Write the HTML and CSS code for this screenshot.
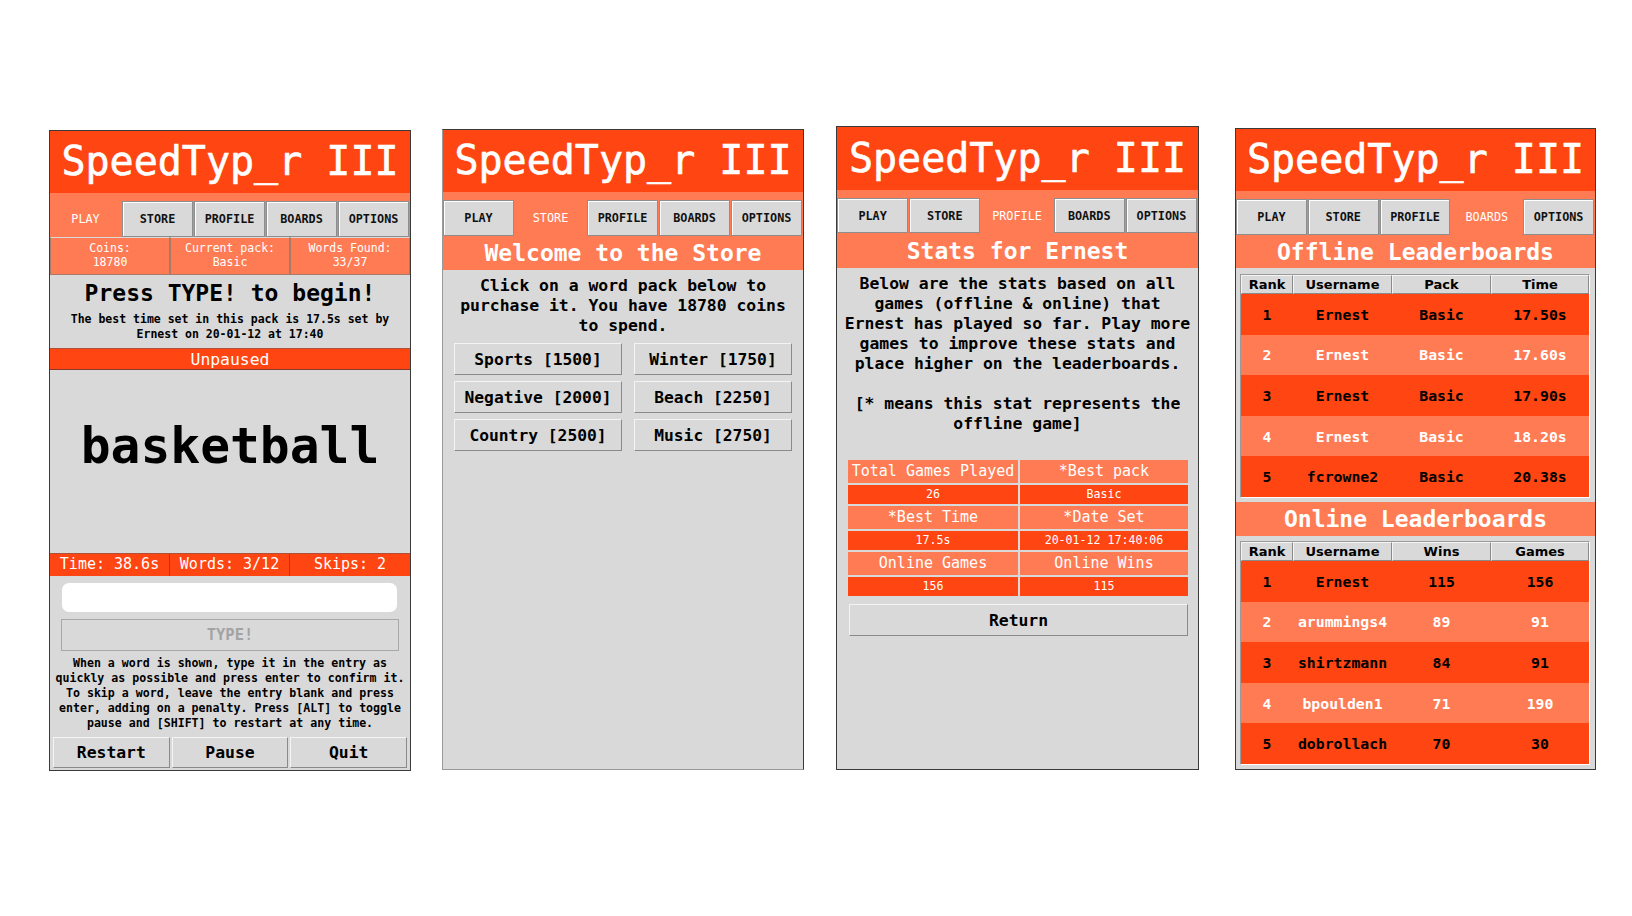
FILE: index.html
```html
<!DOCTYPE html>
<html>
<head>
<meta charset="utf-8">
<title>SpeedTyp_r III</title>
<link rel="stylesheet" href="styles.css">
</head>
<body>
<div class="screens">

  <section class="win win-play">
    <header class="title">SpeedTyp_r III</header>
    <nav class="tabs">
      <span class="tab active">PLAY</span><span class="tab">STORE</span><span class="tab">PROFILE</span><span class="tab">BOARDS</span><span class="tab">OPTIONS</span>
    </nav>
    <div class="info-row">
      <div class="info-cell">Coins:<br>18780</div>
      <div class="info-cell">Current pack:<br>Basic</div>
      <div class="info-cell">Words Found:<br>33/37</div>
    </div>
    <div class="prompt">
      <h2 class="prompt-head">Press TYPE! to begin!</h2>
      <p class="prompt-note">The best time set in this pack is 17.5s set by<br>Ernest on 20-01-12 at 17:40</p>
    </div>
    <div class="status-bar">Unpaused</div>
    <div class="word-area">basketball</div>
    <div class="stats-bar">
      <span class="stats-cell">Time: 38.6s</span>
      <span class="stats-cell">Words: 3/12</span>
      <span class="stats-cell">Skips: 2</span>
    </div>
    <div class="entry"></div>
    <div class="btn type-btn">TYPE!</div>
    <p class="instructions">When a word is shown, type it in the entry as<br>quickly as possible and press enter to confirm it.<br>To skip a word, leave the entry blank and press<br>enter, adding on a penalty. Press [ALT] to toggle<br>pause and [SHIFT] to restart at any time.</p>
    <div class="controls">
      <div class="btn ctrl-btn">Restart</div>
      <div class="btn ctrl-btn">Pause</div>
      <div class="btn ctrl-btn">Quit</div>
    </div>
  </section>

  <section class="win win-store">
    <header class="title">SpeedTyp_r III</header>
    <nav class="tabs">
      <span class="tab">PLAY</span><span class="tab active">STORE</span><span class="tab">PROFILE</span><span class="tab">BOARDS</span><span class="tab">OPTIONS</span>
    </nav>
    <div class="sub-bar">Welcome to the Store</div>
    <p class="para">Click on a word pack below to<br>purchase it. You have 18780 coins<br>to spend.</p>
    <div class="packs">
      <div class="btn pack-btn">Sports [1500]</div>
      <div class="btn pack-btn">Winter [1750]</div>
      <div class="btn pack-btn">Negative [2000]</div>
      <div class="btn pack-btn">Beach [2250]</div>
      <div class="btn pack-btn">Country [2500]</div>
      <div class="btn pack-btn">Music [2750]</div>
    </div>
  </section>

  <section class="win win-profile">
    <header class="title">SpeedTyp_r III</header>
    <nav class="tabs">
      <span class="tab">PLAY</span><span class="tab">STORE</span><span class="tab active">PROFILE</span><span class="tab">BOARDS</span><span class="tab">OPTIONS</span>
    </nav>
    <div class="sub-bar">Stats for Ernest</div>
    <p class="para">Below are the stats based on all<br>games (offline &amp; online) that<br>Ernest has played so far. Play more<br>games to improve these stats and<br>place higher on the leaderboards.<br><br>[* means this stat represents the<br>offline game]</p>
    <div class="stat-grid">
      <div class="stat-head">Total Games Played</div>
      <div class="stat-head">*Best pack</div>
      <div class="stat-val">26</div>
      <div class="stat-val">Basic</div>
      <div class="stat-head">*Best Time</div>
      <div class="stat-head">*Date Set</div>
      <div class="stat-val">17.5s</div>
      <div class="stat-val">20-01-12 17:40:06</div>
      <div class="stat-head">Online Games</div>
      <div class="stat-head">Online Wins</div>
      <div class="stat-val">156</div>
      <div class="stat-val">115</div>
    </div>
    <div class="btn return-btn">Return</div>
  </section>

  <section class="win win-boards">
    <header class="title">SpeedTyp_r III</header>
    <nav class="tabs">
      <span class="tab">PLAY</span><span class="tab">STORE</span><span class="tab">PROFILE</span><span class="tab active">BOARDS</span><span class="tab">OPTIONS</span>
    </nav>
    <div class="sub-bar sub-bar-short">Offline Leaderboards</div>
    <div class="board board-offline">
      <div class="board-head"><span>Rank</span><span>Username</span><span>Pack</span><span>Time</span></div>
      <div class="board-row"><span>1</span><span>Ernest</span><span>Basic</span><span>17.50s</span></div>
      <div class="board-row"><span>2</span><span>Ernest</span><span>Basic</span><span>17.60s</span></div>
      <div class="board-row"><span>3</span><span>Ernest</span><span>Basic</span><span>17.90s</span></div>
      <div class="board-row"><span>4</span><span>Ernest</span><span>Basic</span><span>18.20s</span></div>
      <div class="board-row"><span>5</span><span>fcrowne2</span><span>Basic</span><span>20.38s</span></div>
    </div>
    <div class="sub-bar sub-bar-online">Online Leaderboards</div>
    <div class="board board-online">
      <div class="board-head"><span>Rank</span><span>Username</span><span>Wins</span><span>Games</span></div>
      <div class="board-row"><span>1</span><span>Ernest</span><span>115</span><span>156</span></div>
      <div class="board-row"><span>2</span><span>arummings4</span><span>89</span><span>91</span></div>
      <div class="board-row"><span>3</span><span>shirtzmann</span><span>84</span><span>91</span></div>
      <div class="board-row"><span>4</span><span>bpoulden1</span><span>71</span><span>190</span></div>
      <div class="board-row"><span>5</span><span>dobrollach</span><span>70</span><span>30</span></div>
    </div>
  </section>

</div>
</body>
</html>
```

FILE: styles.css
```css
* { box-sizing: border-box; }

html, body {
  margin: 0;
  padding: 0;
  background: #ffffff;
}

body {
  font-family: "DejaVu Sans Mono", monospace;
  color: #000;
}

.screens {
  display: flex;
  align-items: flex-start;
  padding-left: 49px;
}

.win {
  display: flex;
  flex-direction: column;
  background: #d9d9d9;
  border: 1px solid #3a3a3a;
  width: 362px;
  height: 641px;
  overflow: hidden;
}

.win-play { margin-top: 130px; }
.win-store { margin-top: 129px; margin-left: 31px; border-left-color: #9a9a9a; border-bottom-color: #9a9a9a; }
.win-profile { margin-top: 126px; margin-left: 32px; width: 363px; height: 644px; }
.win-boards { margin-top: 128px; margin-left: 36px; width: 361px; height: 642px; }

.title {
  background: #ff4511;
  color: #fff;
  height: 62px;
  flex: none;
  display: flex;
  align-items: center;
  justify-content: center;
  font-size: 40px;
  -webkit-text-stroke: 0.6px #fff;
  padding-bottom: 2px;
}
.win-profile .title { height: 63px; }

.tabs {
  flex: none;
  background: #ff7b54;
  height: 44px;
  padding: 8px 1px 0 0;
  display: grid;
  grid-template-columns: repeat(5, 1fr);
  column-gap: 1px;
}
.win-profile .tabs { height: 43px; }

.tab {
  display: flex;
  align-items: center;
  justify-content: center;
  background: #d9d9d9;
  border: 1px solid #8e8e8e;
  box-shadow: inset 1px 1px 0 #ffffff;
  font-size: 11.8px;
  font-weight: bold;
  color: #111;
}
.tab.active {
  background: #ff7b54;
  border-color: #ff7b54;
  box-shadow: none;
  color: #fff;
  font-weight: normal;
  margin-top: -8px;
  padding-top: 8px;
}

/* ---------- play ---------- */
.info-row {
  flex: none;
  display: grid;
  grid-template-columns: 1fr 1fr 1fr;
  height: 38px;
}
.info-cell {
  background: #ff7b54;
  color: #fff;
  border: 1px solid #a77a6a;
  border-top-color: #d9d9d9;
  font-size: 11.5px;
  line-height: 14px;
  text-align: center;
  padding-top: 3px;
}

.prompt {
  flex: none;
  height: 73px;
  text-align: center;
  padding-top: 4px;
}
.prompt-head {
  margin: 0;
  font-size: 23px;
  line-height: 28px;
  font-weight: bold;
}
.prompt-note {
  margin: 5px 0 0;
  font-size: 11.5px;
  line-height: 15px;
  font-weight: bold;
}

.status-bar {
  flex: none;
  height: 22px;
  background: #ff4511;
  color: #fff;
  font-size: 16.4px;
  line-height: 21px;
  text-align: center;
  border-top: 1px solid #b0503a;
  border-bottom: 1px solid #8a3a2a;
}

.word-area {
  flex: 1;
  display: flex;
  align-items: center;
  justify-content: center;
  font-size: 49.6px;
  font-weight: bold;
  padding-bottom: 32px;
}

.stats-bar {
  flex: none;
  display: grid;
  grid-template-columns: 1fr 1fr 1fr;
  height: 23px;
  background: #ff4511;
  border-top: 1px solid #b0503a;
}
.stats-cell {
  color: #fff;
  font-size: 15px;
  line-height: 21px;
  text-align: center;
  border-right: 1px solid #9a4030;
}
.stats-cell:last-child { border-right: none; }

.entry {
  flex: none;
  height: 29px;
  margin: 7px 13px 0 12px;
  background: #fff;
  border-radius: 7px;
}

.btn {
  display: flex;
  align-items: center;
  justify-content: center;
  background: #d9d9d9;
  border: 1px solid;
  border-color: #f4f4f4 #8a8a8a #8a8a8a #f4f4f4;
  font-weight: bold;
  color: #000;
}

.type-btn {
  flex: none;
  height: 32px;
  margin: 7px 11px 0 11px;
  border-color: #a8a8a8;
  color: #a3a3a3;
  font-size: 15.5px;
}

.instructions {
  flex: none;
  margin: 5px 0 0;
  font-size: 11.6px;
  line-height: 15px;
  font-weight: bold;
  text-align: center;
}

.controls {
  flex: none;
  display: grid;
  grid-template-columns: 1fr 1fr 1fr;
  column-gap: 2px;
  margin: 6px 3px 2px 3px;
}
.ctrl-btn {
  height: 31px;
  font-size: 16.4px;
}

/* ---------- store / profile ---------- */
.sub-bar {
  flex: none;
  height: 34px;
  background: #ff7b54;
  color: #fff;
  font-size: 23px;
  font-weight: bold;
  display: flex;
  align-items: center;
  justify-content: center;
}
.win-profile .sub-bar { height: 35px; }

.para {
  flex: none;
  margin: 6px 0 0;
  font-size: 16.4px;
  line-height: 20px;
  font-weight: bold;
  text-align: center;
}

.packs {
  display: grid;
  grid-template-columns: 168px 158px;
  column-gap: 12px;
  row-gap: 6px;
  margin: 7px 0 0 11px;
}
.pack-btn {
  height: 32px;
  font-size: 16.3px;
}

.stat-grid {
  display: grid;
  grid-template-columns: 170px 168px;
  grid-template-rows: 23px 19px 23px 19px 23px 19px;
  gap: 2px;
  margin: 26px 0 0 11px;
}
.stat-head {
  background: #ff7b54;
  color: #fff;
  font-size: 15px;
  text-align: center;
  line-height: 23px;
}
.stat-val {
  background: #ff4511;
  color: #fff;
  font-size: 11.6px;
  text-align: center;
  line-height: 19px;
}

.return-btn {
  height: 32px;
  margin: 8px 10px 0 12px;
  font-size: 16.4px;
}

/* ---------- boards ---------- */
.sub-bar-short { height: 33px; }
.sub-bar-online { margin-top: 4px; }

.board {
  flex: none;
  margin: 6px 5px 0 4px;
  border: 1px solid;
  border-color: #9a9a9a #ffffff #ffffff #9a9a9a;
}
.board-online { margin-top: 5px; }

.board-head,
.board-row {
  display: grid;
  grid-template-columns: 52px 99px 99px 1fr;
}
.board-head {
  height: 19px;
}
.board-head span {
  display: flex;
  align-items: center;
  justify-content: center;
  background: #d9d9d9;
  border: 1px solid;
  border-color: #f4f4f4 #8a8a8a #8a8a8a #f4f4f4;
  font-family: "DejaVu Sans", sans-serif;
  font-weight: bold;
  font-size: 13px;
}
.board-row {
  height: 40.6px;
  background: #ff4511;
  color: #000;
  font-size: 14.8px;
  font-weight: bold;
}
.board-row:nth-child(odd) {
  background: #ff7b54;
  color: #fff;
}
.board-row span {
  display: flex;
  align-items: center;
  justify-content: center;
  white-space: nowrap;
  overflow: hidden;
}
```
